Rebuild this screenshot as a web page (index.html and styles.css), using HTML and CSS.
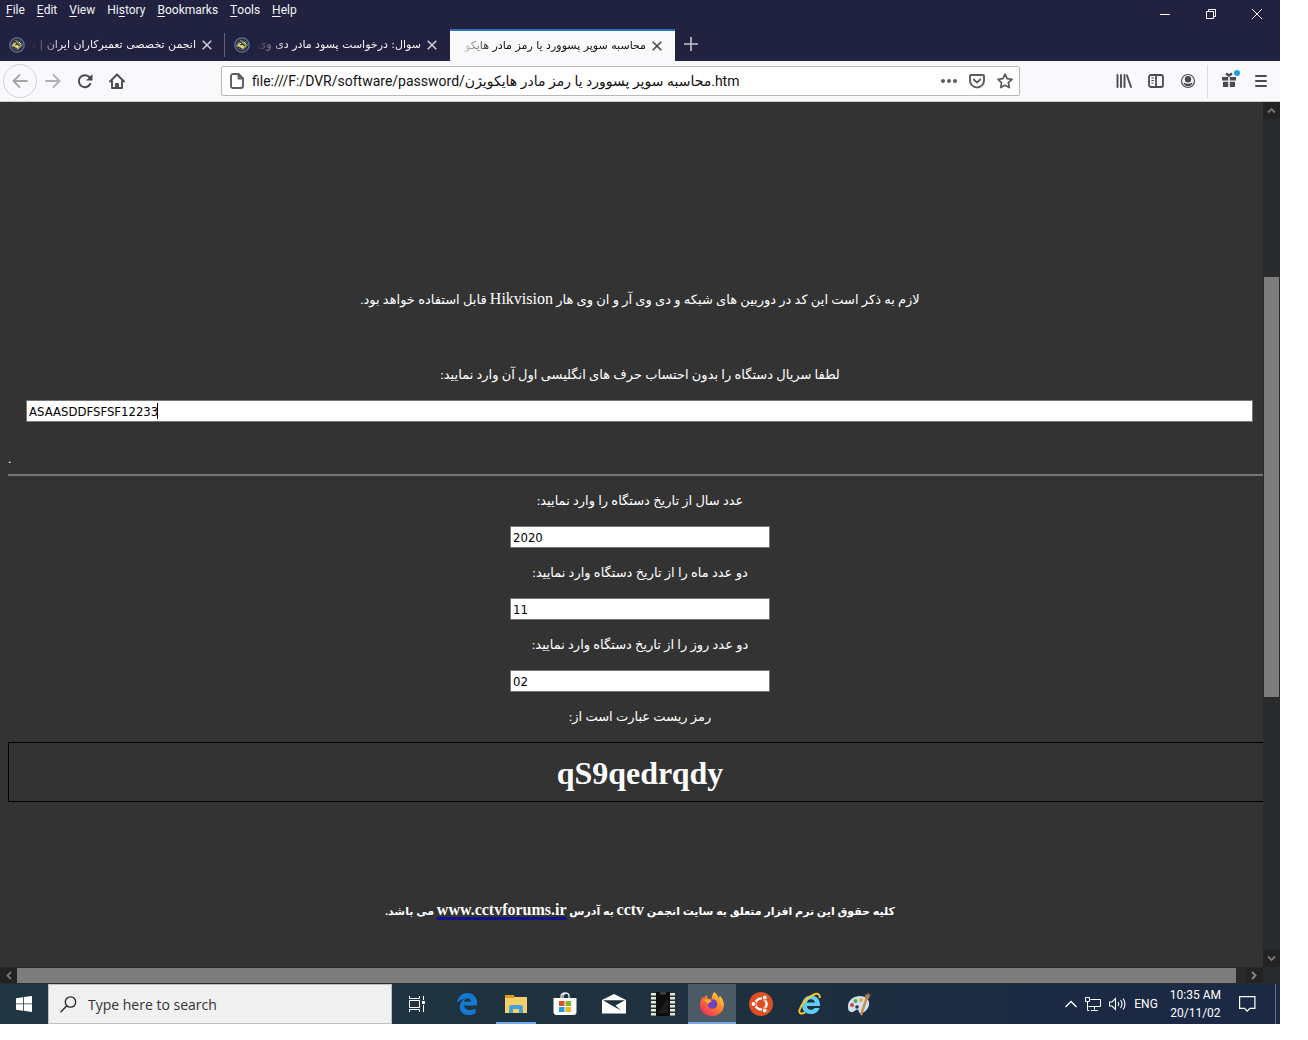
FILE: index.html
```html
<!DOCTYPE html>
<html lang="en">
<head>
<meta charset="utf-8">
<title>Desktop</title>
<link rel="stylesheet" href="styles.css">
</head>
<body>
<svg class="defs" width="0" height="0" aria-hidden="true">
  <symbol id="forum" viewBox="0 0 16 16">
    <circle cx="8" cy="8" r="7.2" fill="#2b3444" stroke="#58729c" stroke-width="1.3"/>
    <path d="M2 9 6 3l6 1 2 4-5 5-4-1z" fill="#8d8350"/>
    <path d="M3 8l5-3 4 4-4 3z" fill="#d6cf7a"/>
    <path d="M5 4l6 5M9 3l4 4M4 10l4 2M6 8l3-1" stroke="#2b3040" stroke-width="1.2"/>
    <path d="M10 5l2 2M6 6l1 1" stroke="#f3efc0" stroke-width="1"/>
  </symbol>
  <symbol id="close" viewBox="0 0 10 10"><path d="M.7.7l8.6 8.6M9.3.7L.7 9.3" stroke="currentColor" stroke-width="1.6" fill="none"/></symbol>
</svg>

<div class="window">
  <header class="titlebar">
    <div class="menurow">
      <nav class="menus">
        <button><u>F</u>ile</button><button><u>E</u>dit</button><button><u>V</u>iew</button><button>Hi<u>s</u>tory</button><button><u>B</u>ookmarks</button><button><u>T</u>ools</button><button><u>H</u>elp</button>
      </nav>
      <div class="controls">
        <button aria-label="Minimize"><svg width="10" height="10"><path d="M0 5.5h10" stroke="#fff"/></svg></button>
        <button aria-label="Restore"><svg width="10" height="10" fill="none" stroke="#fff"><path d="M.5 2.5h7v7h-7zM2.500 2.500V.5h7v7h-2"/></svg></button>
        <button aria-label="Close"><svg width="10" height="10" fill="none" stroke="#fff"><path d="M0 0l10 10M10 0L0 10"/></svg></button>
      </div>
    </div>
    <div class="tabs">
      <div class="tab">
        <svg width="16" height="16"><use href="#forum"/></svg>
        <span class="tabtitle" dir="rtl" lang="fa">انجمن تخصصی تعمیرکاران ایران | ت</span>
        <button aria-label="Close tab"><svg width="10" height="10"><use href="#close"/></svg></button>
      </div>
      <div class="tab">
        <svg width="16" height="16"><use href="#forum"/></svg>
        <span class="tabtitle" dir="rtl" lang="fa">سوال: درخواست پسود مادر دی وی</span>
        <button aria-label="Close tab"><svg width="10" height="10"><use href="#close"/></svg></button>
      </div>
      <div class="tab active">
        <span class="tabtitle" dir="rtl" lang="fa">محاسبه سوپر پسوورد یا رمز مادر هایکو</span>
        <button aria-label="Close tab"><svg width="10" height="10"><use href="#close"/></svg></button>
      </div>
      <button class="newtab" aria-label="New tab"><svg width="14" height="14"><path d="M7 0v14M0 7h14" stroke="#c3c4cf" stroke-width="1.6"/></svg></button>
    </div>
  </header>

  <div class="toolbar">
    <div class="navs">
      <button class="back" aria-label="Back"><svg width="16" height="16" fill="none" stroke="#a5a5a8" stroke-width="1.8" stroke-linecap="round" stroke-linejoin="round"><path d="M15 8H1.500M7.500 2l-6 6 6 6"/></svg></button>
      <button aria-label="Forward"><svg width="16" height="16" fill="none" stroke="#b1b1b4" stroke-width="1.8" stroke-linecap="round" stroke-linejoin="round"><path d="M1 8h13.500M8.500 2l6 6-6 6"/></svg></button>
      <button aria-label="Reload"><svg width="16" height="16" fill="none" stroke="#4a4a4f" stroke-width="2"><path d="M13.200 11A6 6 0 1 1 12 3.800L14 6" stroke-linecap="round"/><path d="M15.500 1v6.500H9z" fill="#4a4a4f" stroke="none"/></svg></button>
      <button aria-label="Home"><svg width="16" height="16" fill="none" stroke="#4a4a4f" stroke-width="1.900" stroke-linejoin="round" stroke-linecap="round"><path d="M1 8.500L8 1.500l7 7M3 8v7h10V8"/><path d="M7 15v-4h2v4"/></svg></button>
    </div>
    <div class="urlbar">
      <svg width="14" height="16" fill="none" stroke="#5c5c60" stroke-width="1.900" stroke-linejoin="round"><path d="M3 1h5.500L13 5.500V13a2 2 0 0 1-2 2H3a2 2 0 0 1-2-2V3a2 2 0 0 1 2-2zM8.500 1v4.500H13"/></svg>
      <input class="url" aria-label="Address" value="file:///F:/DVR/software/password/محاسبه سوپر پسوورد یا رمز مادر هایکویژن.htm">
      <button aria-label="Page actions"><svg width="16" height="16" fill="#5c5c60"><circle cx="2" cy="8" r="2"/><circle cx="8" cy="8" r="2"/><circle cx="14" cy="8" r="2"/></svg></button>
      <button aria-label="Save to Pocket"><svg width="16" height="16" fill="none" stroke="#5c5c60" stroke-width="1.900" stroke-linecap="round" stroke-linejoin="round"><path d="M2 2h12q1 0 1 1v4.500a7 7 0 0 1-14 0V3q0-1 1-1z"/><path d="M4.800 6.500L8 9.600l3.200-3.100"/></svg></button>
      <button aria-label="Bookmark"><svg width="16" height="16" fill="none" stroke="#5c5c60" stroke-width="1.700" stroke-linejoin="round"><path d="M8 1.200l2.100 4.500 4.900.6-3.600 3.400.9 4.900L8 12.200l-4.300 2.400.9-4.900L1 6.300l4.900-.6z"/></svg></button>
    </div>
    <div class="tools">
      <button aria-label="Library"><svg width="16" height="16" stroke="#4a4a4f" stroke-width="1.900" stroke-linecap="round"><path d="M1.500 2v12M5 2v12M8.500 2v12M11 2.500L15 14"/></svg></button>
      <button aria-label="Sidebar"><svg width="16" height="16" fill="none" stroke="#4a4a4f" stroke-width="1.800"><rect x="1" y="2" width="14" height="12" rx="2"/><path d="M8 2v12"/><path d="M3.500 5h2.500M3.500 7.500h2.500M3.500 10h2" stroke-width="1"/></svg></button>
      <button aria-label="Account"><svg width="16" height="16"><circle cx="8" cy="8" r="6.500" fill="none" stroke="#4a4a4f" stroke-width="1.200"/><circle cx="8" cy="6.200" r="3.200" fill="#4a4a4f"/><path d="M3.500 9.500q4.500 2.500 9 0-.5 3.700-4.500 3.700T3.500 9.500z" fill="#4a4a4f"/></svg></button>
      <i class="rule"></i>
      <button class="gift" aria-label="What's new"><svg width="20" height="20"><path d="M1 8h6.200v3.500H1zM8.800 8H15v3.500H8.800zM2 12.700h5.200V18H2zM8.800 12.700H14V18H8.800z" fill="#4a4a4f"/><path d="M5 4.500L8 6.500l3-2" stroke="#4a4a4f" stroke-width="2.400" fill="none"/><circle cx="16" cy="4" r="3" fill="#1ea1e0"/></svg></button>
      <button aria-label="Menu"><svg width="14" height="14" stroke="#4a4a4f" stroke-width="2" stroke-linecap="round"><path d="M2 2h10M2 7h10M2 12h10"/></svg></button>
    </div>
  </div>

  <div class="viewport">
    <main class="page" lang="fa">
      <p class="intro" dir="rtl">لازم به ذکر است این کد در دوربین های شبکه و دی وی آر و ان وی هار <span class="latin">Hikvision</span> قابل استفاده خواهد بود.</p>
      <p class="serial"><label for="serial" dir="rtl">لطفا سریال دستگاه را بدون احتساب حرف های انگلیسی اول آن وارد نمایید:</label></p>
      <div class="wide"><input id="serial" value="ASAASDDFSFSF12233"><i class="caret"></i></div>
      <p class="dot">.</p>
      <hr>
      <p><label for="year" dir="rtl">عدد سال از تاریخ دستگاه را وارد نمایید:</label></p>
      <input id="year" value="2020">
      <p><label for="month" dir="rtl">دو عدد ماه را از تاریخ دستگاه وارد نمایید:</label></p>
      <input id="month" value="11">
      <p><label for="day" dir="rtl">دو عدد روز را از تاریخ دستگاه وارد نمایید:</label></p>
      <input id="day" value="02">
      <p dir="rtl">رمز ریست عبارت است از:</p>
      <h1>qS9qedrqdy</h1>
      <p class="rights" dir="rtl">کلیه حقوق این نرم افزار متعلق به سایت انجمن <span class="latin">cctv</span> به آدرس <a class="latin" href="#">www.cctvforums.ir</a> می باشد.</p>
    </main>
    <div class="vscroll">
      <svg width="17" height="17"><path d="M5 10.500l3.500-3.500 3.500 3.500" fill="none" stroke="#777" stroke-width="1.800"/></svg>
      <i class="gap-a"></i><i class="thumb"></i><i class="gap-b"></i>
      <svg width="17" height="17"><path d="M5 6.500l3.500 3.500L12 6.500" fill="none" stroke="#777" stroke-width="1.800"/></svg>
    </div>
  </div>
  <div class="hscroll">
    <svg width="17" height="15"><path d="M11 4L7.500 7.500 11 11" fill="none" stroke="#777" stroke-width="1.800"/></svg>
    <i class="thumb"></i><i class="rest"></i>
    <svg width="17" height="15"><path d="M6 4l3.500 3.500L6 11" fill="none" stroke="#888" stroke-width="1.800"/></svg>
    <i class="corner"></i>
  </div>

  <footer class="taskbar">
    <button class="start" aria-label="Start"><svg width="16" height="16" fill="#fff"><path d="M0 2.200L7 1.200V7.500H0zM7.800 1.100L16 0v7.500H7.800zM0 8.300h7v6.400L0 13.800zM7.800 8.300H16V16l-8.200-1.200z"/></svg></button>
    <label class="search"><svg width="17" height="17" fill="none" stroke="#222" stroke-width="1.300"><circle cx="10.500" cy="6" r="5.200"/><path d="M6.800 9.800L.5 16.300"/></svg><input aria-label="Search" placeholder="Type here to search"></label>
    <div class="apps">
      <button class="view" aria-label="Task view"><svg width="18" height="16" fill="none" stroke="#fff"><path d="M1.500 0v2.500h10V0M1.500 4.500h10v7h-10zM1.500 16v-2.500h10V16M15.500 0v4M15.500 9v7"/><path d="M14 5h3v3h-3z" fill="#fff" stroke="none"/></svg></button>
      <button aria-label="Edge"><svg width="20" height="22"><path d="M0 10C1 3 5.500 0 10.500 0 16.500 0 20 4.500 20 10v2.500H7c.3 3 3 4.500 6 4.500 2.300 0 4-.6 5.500-1.500v4.700c-2 1.200-4.500 1.800-7 1.800C6 22 2.800 18.500 2.800 14c0-4 2-6.800 5-8.300C4.500 6 1.800 7.800 0 10zM7.100 8.700h6.800c0-2-1.200-3.400-3.200-3.400-2 0-3.300 1.400-3.600 3.400z" fill="#1479d2"/></svg></button>
      <button class="open" aria-label="File Explorer"><svg width="22" height="19"><path d="M0 0h8l2 2h12v16H0z" fill="#f6cf68"/><path d="M0 0h8l1.500 3H0z" fill="#d99a1d"/><path d="M4 18v-6q0-2 2-2h10q2 0 2 2v6h-4v-4H8v4z" fill="#4a9fd5"/></svg></button>
      <button aria-label="Store"><svg width="24" height="24"><path d="M8 7V4q0-3 4-3t4 3v3M10 6V3.500Q10 2 12 2" fill="none" stroke="#e8eef0" stroke-width="1.300"/><path d="M.5 6h23v14q0 3-3 3h-17q-3 0-3-3z" fill="#fff"/><path fill="#e04f2d" d="M6 9h5.500v5H6z"/><path fill="#7eb62b" d="M12.500 9H18v5h-5.500z"/><path fill="#1d9ee4" d="M6 15h5.500v5H6z"/><path fill="#f3b51b" d="M12.500 15H18v5h-5.500z"/></svg></button>
      <button aria-label="Mail"><svg width="24" height="20"><path d="M0 6l12-6 12 6v13.500H0z" fill="#fff"/><path d="M1 6.300h22L13.500 11.500l5.500 5L9 11z" fill="#20323e"/></svg></button>
      <button aria-label="Programmer"><svg width="24" height="24"><path d="M2.500 1v23M21.500 1v23" stroke="#e4e8c8" stroke-width="5" stroke-dasharray="2.600 1.400"/><rect x="5" y="0" width="14" height="24" fill="#0d0d0e"/><path d="M9 0h6v2.500H9z" fill="#3c4042"/><path d="M7 21L17 6v15z" fill="#1c1d1f"/></svg></button>
      <button class="open current" aria-label="Firefox"><svg width="24" height="24">
        <defs><linearGradient id="fox" x1="1" y1="0" x2=".2" y2="1"><stop offset="0" stop-color="#fff04d"/><stop offset=".45" stop-color="#ff8a26"/><stop offset="1" stop-color="#f02a60"/></linearGradient></defs>
        <path d="M14 0c3 2 4 4 4.500 6 1-.5 1.200-1.500 1.200-2.500C22 6 24 9 24 13c0 6-5 11-12 11S0 19.500 0 13c0-3 1.200-6 3-8.500l1 2.200C4.500 5 5.500 4 6.500 3l1 3.500 4 .5c.5-3 1-5 2.500-7z" fill="url(#fox)"/><circle cx="12.500" cy="12" r="4.800" fill="#6c43c4"/><path d="M4 8c4-1.500 6-.5 8 1.500-2 .2-3 1.500-3.500 2.500z" fill="#ffae2e"/></svg></button>
      <button aria-label="Ubuntu"><svg width="24" height="24"><circle cx="12" cy="12" r="12" fill="#dd4f23"/><circle cx="12" cy="12" r="5.600" fill="none" stroke="#fff" stroke-width="2.400"/><g stroke="#dd4f23" stroke-width="1.200" fill="#fff"><circle cx="4.500" cy="12" r="2.500"/><circle cx="15.800" cy="5.500" r="2.500"/><circle cx="15.800" cy="18.500" r="2.500"/></g></svg></button>
      <button aria-label="Internet Explorer"><svg width="24" height="24"><path d="M22 14H9c.2 2.500 1.700 3.800 4 3.800 1.600 0 2.800-.6 3.500-1.800H21.500c-1.400 4-4.500 6-8.600 6C7 22 4 18 4 13S7.500 3.500 13 3.500c6 0 9.300 4.500 9 10.500zM9 10.500h8c-.3-2-1.800-3.300-4-3.300s-3.700 1.200-4 3.300z" fill="#5fcdf5"/><path d="M21.500 6C22.500 2.500 20 .5 15 3 9 5.500 3 12.500 1.500 18c-.8 3.500 1.500 4.500 5.500 2.500" fill="none" stroke="#f3c927" stroke-width="2"/></svg></button>
      <button aria-label="Paint"><svg width="24" height="24"><path d="M1 14C1 8 7 4 13 4s10 4 9 9-6 9-9 8c-2-.7-.5-3-2.500-3.500S7 21 4 20s-3-3-3-6z" fill="#cfe1ef"/><circle cx="5" cy="13" r="2" fill="#d8453d"/><circle cx="8.500" cy="9" r="2" fill="#4fae50"/><circle cx="14" cy="8" r="2" fill="#e6b430"/><circle cx="10" cy="15" r="1.800" fill="#24364a"/><path d="M14 23L20 5" stroke="#c98a4b" stroke-width="2.400"/><path d="M18.500 6l-.5-4 2 1 1-2.500 1 2.200 2-.7-2.500 5z" fill="#b77a50"/></svg></button>
    </div>
    <div class="tray">
      <svg width="12" height="8" fill="none" stroke="#fff" stroke-width="1.300"><path d="M.5 7L6 1.500 11.500 7"/></svg>
      <svg width="16" height="14" fill="none" stroke="#fff"><path d="M5.500 2.500h10v7H3.500M.5.500h4v4h-4zM2.500 4.500v9h2M9.500 9.500v3M6 13.500h7"/></svg>
      <svg width="17" height="14" fill="none" stroke="#fff" stroke-width="1.100"><path d="M.5 5h2.500l3.500-3.500v11L3 9H.5zM9 5q1.500 2 0 4M11.500 3q3 4 0 8M14 1.500q4 5.500 0 11"/></svg>
      <span class="lang">ENG</span>
      <time>10:35 AM<br>20/11/02</time>
      <svg class="note" width="17" height="16" fill="none" stroke="#fff" stroke-width="1.200"><path d="M.6.6h15.300v11.800h-5L8.200 15.200l-2.700-2.800H.6z"/></svg>
      <i class="peek"></i>
    </div>
  </footer>
</div>
</body>
</html>
```
FILE: styles.css
```css
* { box-sizing: border-box; }
body { margin: 0; background: #fff; font-family: "Open Sans", "DejaVu Sans", sans-serif; font-size: 12px; }
button { border: 0; padding: 0; background: none; color: inherit; font: inherit; display: flex; align-items: center; justify-content: center; flex: none; }
svg { display: block; flex: none; }
i { display: block; flex: none; }
.defs { position: absolute; }
.window { min-height: 100vh; display: flex; flex-direction: column; padding: 0 28px 16px 0; }

.titlebar { background: #20223f; color: #f4f4f8; height: 61px; flex: none; display: flex; flex-direction: column; justify-content: space-between; }
.menurow { display: flex; justify-content: space-between; height: 28px; }
.menus { display: flex; gap: 12px; padding-left: 6px; height: 20px; font-family: Roboto, sans-serif; }
.menus u { text-underline-offset: 2px; }
.controls { display: flex; }
.controls button { width: 46px; height: 28px; }
.tabs { display: flex; height: 32px; }
.tab { flex: 0 1 225px; min-width: 0; display: flex; align-items: center; gap: 6px; padding: 0 13px 0 9px; position: relative; }
.tab:first-child::after { content: ""; position: absolute; right: 0; top: 4px; bottom: 4px; width: 1px; background: #62647a; }
.tabtitle { flex: 1; min-width: 0; overflow: hidden; white-space: nowrap; font-size: 11px; line-height: 20px; font-family: "DejaVu Sans", sans-serif; mask-image: linear-gradient(to right, transparent, #000 32px); }
.tab button { color: #c9cad6; }
.active { background: #f9f9fb; color: #111; border-top: 2px solid #3273b5; }
.active button { color: #444; }
.newtab { width: 32px; height: 30px; }

.toolbar { display: flex; align-items: center; height: 41px; flex: none; background: #f9f9fb; border-bottom: 1px solid #ccc; }
.navs { display: flex; align-items: center; flex: none; width: 221px; padding-left: 3px; }
.navs button { width: 32px; height: 32px; }
.navs .back { width: 34px; height: 34px; border: 1px solid #d3d3d6; border-radius: 50%; }
.urlbar { display: flex; align-items: center; gap: 12px; flex: 0 1 799px; min-width: 0; height: 30px; padding: 0 6px 0 8px; background: #fff; border: 1px solid #b9b9bc; border-radius: 2px; }
.url { flex: 1; min-width: 0; border: 0; padding: 0; margin-left: -4px; background: none; font: 14px/20px Roboto, "DejaVu Sans", sans-serif; color: #111; }
.tools { display: flex; align-items: center; margin-left: auto; padding-right: 3px; }
.tools button { width: 32px; height: 32px; }
.tools .rule { width: 1px; height: 33px; background: #dcdcdf; margin: 0 5px 0 3px; }
.tools .gift { padding: 0 0 4px 4px; }

.viewport { display: flex; flex: 1; overflow: hidden; background: #333; }
.page { flex: 1; min-width: 0; overflow: hidden; padding: 188px 0 16px 8px; display: flex; flex-direction: column; color: #fff; font: 13px/18px "Liberation Serif", "DejaVu Sans", serif; }
.page > * { margin-right: -9px; flex: none; }
.page p { margin-top: 0; margin-bottom: 0; height: 18px; text-align: center; white-space: nowrap; }
.page .latin { font-size: 16px; }
.page p.serial { margin-top: 58px; }
.page input { height: 22px; margin-top: 16px; margin-bottom: 16px; padding: 0 2px; border: 1px solid #777; background: #fff; color: #000; font: 13px "DejaVu Sans Condensed", "DejaVu Sans", sans-serif; }
.page > input { width: 260px; align-self: center; }
.wide { padding: 0 19px 0 18px; position: relative; }
.wide input { display: block; width: 100%; margin-bottom: 0; }
.caret { position: absolute; left: 149px; bottom: 3px; width: 1px; height: 16px; background: #000; }
.page p.dot { margin-top: 28px; text-align: left; }
.page hr { border: 0; height: 2px; background: #777; margin-top: 6px; margin-bottom: 16px; margin-left: 0; }
.page h1 { margin-top: 16px; margin-bottom: 0; height: 60px; border: 1px solid #000; text-align: center; font-size: 32px; line-height: 60px; }
.page p.rights { margin-top: 99px; font-size: 11px; font-weight: bold; }
.rights a { color: #fff; text-decoration: underline 3px #10108c; text-decoration-skip-ink: none; }

.vscroll { width: 17px; display: flex; flex-direction: column; background: #292a2b; flex: none; }
.vscroll .thumb { flex: 419 0 0; margin-left: 1px; margin-right: 1px; background: #7d7d7d; }
.gap-a { flex: 158 0 0; }
.gap-b { flex: 253 0 0; }
.vscroll svg, .hscroll svg { background: #222324; }
.hscroll { display: flex; height: 17px; flex: none; background: #292a2b; border-top: 1px solid #292a2b; border-bottom: 1px solid #292a2b; }
.hscroll .thumb { flex: 1; background: #7d7d7d; }
.hscroll .rest { width: 10px; }
.corner { width: 17px; }

.taskbar { display: flex; height: 40px; flex: none; background: linear-gradient(to right, #203743, #1f303e 55%, #1b2944 85%); color: #fff; }
.start { width: 48px; }
.search { flex: 0 1 344px; display: flex; align-items: center; gap: 11px; background: #f1f1f1; border: 1px solid #c2c2c2; padding: 0 11px; }
.search input { flex: 1; min-width: 0; border: 0; padding: 0; background: none; font: 14px "Open Sans", sans-serif; }
.search input::placeholder { color: #333; opacity: 1; }
.apps { display: flex; gap: 1px; flex: 1; }
.apps button { width: 48px; }
.apps .view { width: 50px; }
.open { background: linear-gradient(#76a9e8, #76a9e8) center bottom / 40px 2px no-repeat; }
.apps .current { background: linear-gradient(#76a9e8, #76a9e8) center bottom / 48px 2px no-repeat #4c5a65; }
.tray { display: flex; align-items: center; gap: 8px; font-family: Roboto, sans-serif; line-height: 18px; }
.tray time { text-align: center; margin-left: 4px; }
.tray .note { margin: 0 11px 0 10px; }
.peek { width: 1px; height: 40px; background: #65708a; margin-right: 4px; }
```
